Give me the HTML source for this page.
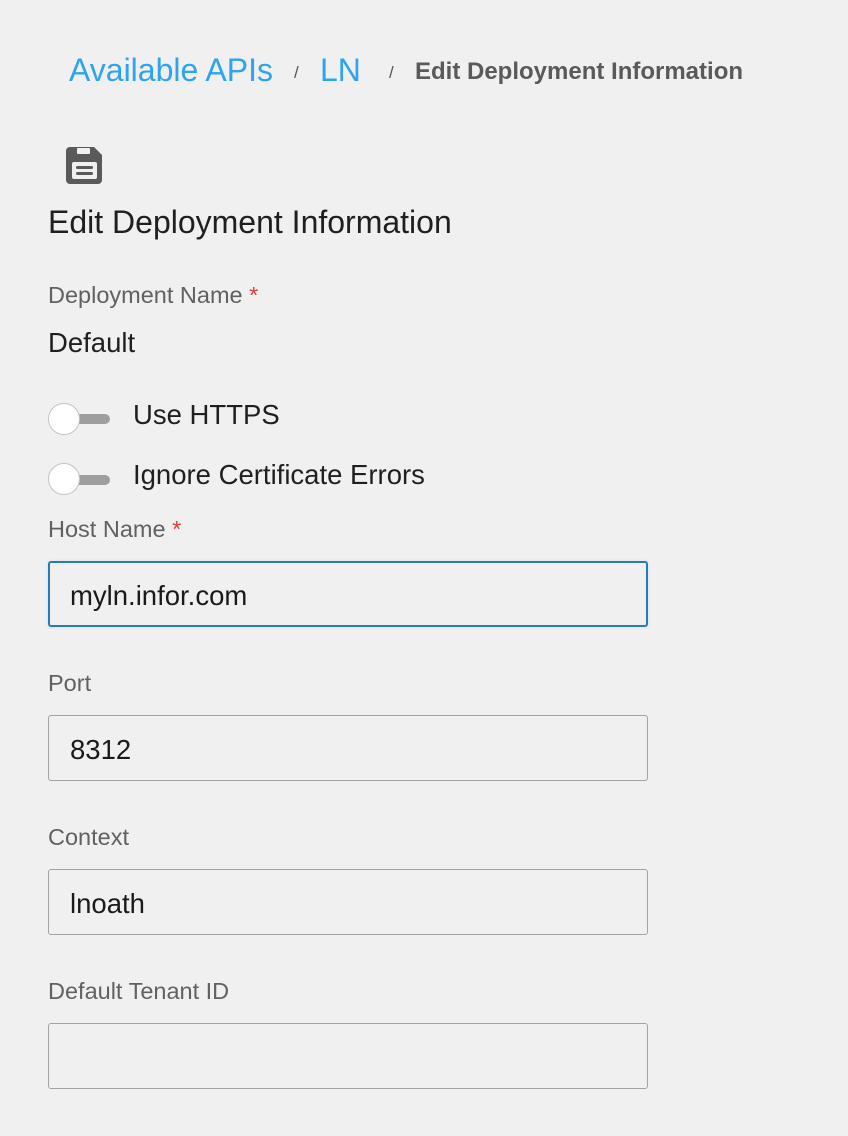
<!DOCTYPE html>
<html><head><style>
body{margin:0;width:848px;height:1136px;background:#f0f0f0;font-family:"Liberation Sans",Arial,sans-serif;position:relative;overflow:hidden}
.a{position:absolute;white-space:nowrap;line-height:1}
.bc{color:#2ea3ef;font-size:32px}
.sl{color:#555;font-size:17px}
.lbl{color:#616161;font-size:23.5px}
.req{color:#e0373a}
.inp{position:absolute;left:48px;width:600px;height:66px;border:1px solid #a3a3a3;border-radius:3px;box-sizing:border-box;background:#f0f0f0}
.inp span{position:absolute;left:21px;top:18px;font-size:27.5px;color:#1a1a1a}
.tr{position:absolute;left:64px;width:46px;height:10px;background:#9e9e9e;border-radius:5px}
.kn{position:absolute;left:48px;width:30px;height:30px;border-radius:50%;background:#fff;border:1px solid #c4c4c4}
</style></head><body>
<div class="a bc" style="left:69px;top:54px">Available APIs</div>
<div class="a sl" style="left:294px;top:64px">/</div>
<div class="a bc" style="left:320px;top:54px">LN</div>
<div class="a sl" style="left:389px;top:64px">/</div>
<div class="a" style="left:415px;top:60px;font-size:24px;font-weight:bold;color:#5a5a5a">Edit Deployment Information</div>
<svg class="a" style="left:66px;top:147px" width="37" height="37" viewBox="0 0 37 37">
<path d="M4 0h24l8 8v25a4 4 0 0 1-4 4H4a4 4 0 0 1-4-4V4a4 4 0 0 1 4-4z" fill="#5a5a5a"/>
<rect x="11" y="1" width="13" height="6" rx="1" fill="#f0f0f0"/>
<rect x="6" y="15" width="25" height="17" rx="2" fill="#f0f0f0"/>
<rect x="10" y="19" width="17" height="3" rx="1.5" fill="#5a5a5a"/>
<rect x="10" y="25" width="17" height="3" rx="1.5" fill="#5a5a5a"/>
</svg>
<div class="a" style="left:48px;top:206px;font-size:32px;color:#1f1f1f">Edit Deployment Information</div>
<div class="a lbl" style="left:48px;top:284px">Deployment Name <span class="req">*</span></div>
<div class="a" style="left:48px;top:329px;font-size:27.5px;color:#1f1f1f">Default</div>
<div class="tr" style="top:414px"></div><div class="kn" style="top:403px"></div>
<div class="a" style="left:133px;top:401px;font-size:27.5px;color:#1f1f1f">Use HTTPS</div>
<div class="tr" style="top:475px"></div><div class="kn" style="top:463px"></div>
<div class="a" style="left:133px;top:461px;font-size:27.5px;color:#1f1f1f">Ignore Certificate Errors</div>
<div class="a lbl" style="left:48px;top:518px">Host Name <span class="req">*</span></div>
<div class="inp" style="top:561px;border:2px solid #2b7ab3;box-shadow:0 0 3px #cfe0ee"><span style="left:20px;top:17px">myln.infor.com</span></div>
<div class="a lbl" style="left:48px;top:672px">Port</div>
<div class="inp" style="top:715px"><span>8312</span></div>
<div class="a lbl" style="left:48px;top:826px">Context</div>
<div class="inp" style="top:869px"><span>lnoath</span></div>
<div class="a lbl" style="left:48px;top:980px">Default Tenant ID</div>
<div class="inp" style="top:1023px"></div>
</body></html>
